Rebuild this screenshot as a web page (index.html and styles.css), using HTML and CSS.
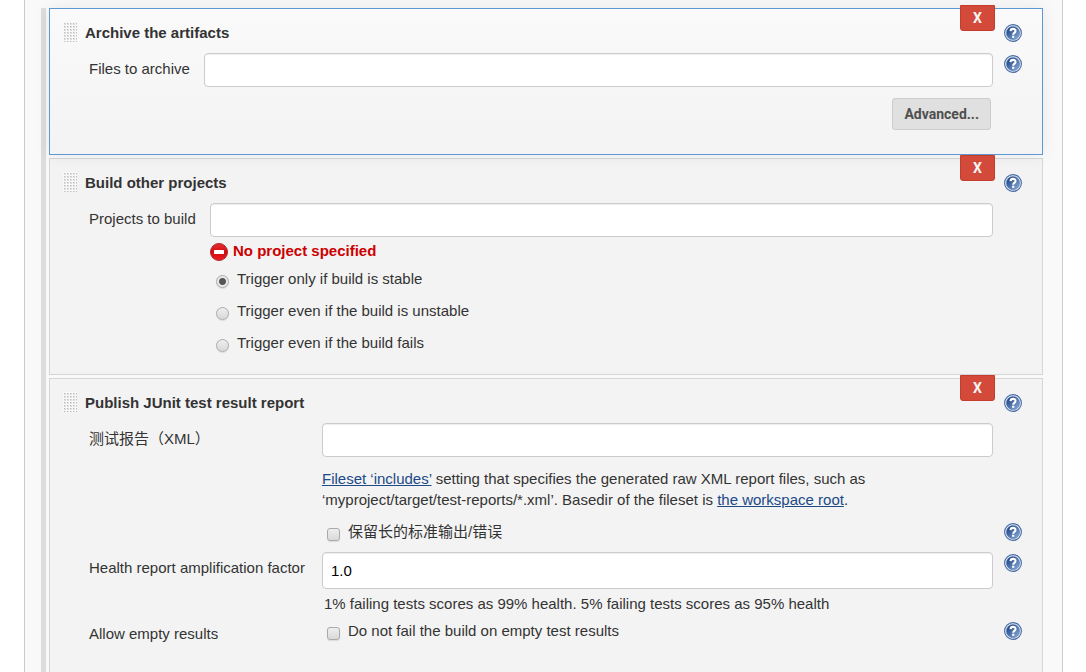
FILE: index.html
```html
<!DOCTYPE html>
<html lang="en">
<head>
<meta charset="utf-8">
<title>Post-build actions</title>
<link rel="stylesheet" href="styles.css">
</head>
<body>
<svg class="defs" aria-hidden="true">
  <defs>
    <linearGradient id="helpFill" x1="0" y1="0" x2="1" y2="1">
      <stop offset="0.15" stop-color="#1f4585"/>
      <stop offset="1" stop-color="#90b2df"/>
    </linearGradient>
    <linearGradient id="errorFill" x1="0" y1="0" x2="0" y2="1">
      <stop offset="0" stop-color="#e33030"/>
      <stop offset="0.5" stop-color="#d30c12"/>
      <stop offset="1" stop-color="#ef1b1b"/>
    </linearGradient>
    <pattern id="grip" width="3" height="3" patternUnits="userSpaceOnUse">
      <rect width="3" height="3" fill="#f8f8f8"/>
      <rect x="1" y="1" width="2" height="2" fill="#dedede"/>
      <rect x="1" y="1" width="1" height="1" fill="#bdbdbd"/>
    </pattern>
    <symbol id="help" viewBox="0 0 18 18">
      <circle cx="9" cy="9" r="8.4" fill="#e3eaf4" stroke="#476ba4" stroke-width="1.1"/>
      <circle cx="9" cy="9" r="6.6" fill="url(#helpFill)" stroke="#5e7eb0" stroke-width="0.6"/>
      <path d="M6.5 7.1C6.6 4.2 11.5 4 11.5 7c0 1.9-2.3 1.9-2.3 3.7" fill="none" stroke="#fff" stroke-width="2.1"/>
      <rect x="8.1" y="11.7" width="2.2" height="2.1" fill="#fff"/>
    </symbol>
  </defs>
</svg>

<main class="panel">
  <div class="card-list">
    <section class="card card-active">
      <button class="remove" type="button">X</button>
      <header class="card-head">
        <svg class="handle" viewBox="0 0 14 20"><rect width="14" height="20" fill="url(#grip)"/></svg>
        <h2 class="title">Archive the artifacts</h2>
        <button class="help" type="button" aria-label="Help"><svg class="icon"><use href="#help"/></svg></button>
      </header>
      <div class="fields fields-archive">
        <label class="label" for="files">Files to archive</label>
        <input class="text" id="files" type="text">
        <button class="help" type="button" aria-label="Help"><svg class="icon"><use href="#help"/></svg></button>
        <div class="field actions"><button class="advanced" type="button">Advanced...</button></div>
      </div>
    </section>

    <section class="card">
      <button class="remove" type="button">X</button>
      <header class="card-head">
        <svg class="handle" viewBox="0 0 14 20"><rect width="14" height="20" fill="url(#grip)"/></svg>
        <h2 class="title">Build other projects</h2>
        <button class="help" type="button" aria-label="Help"><svg class="icon"><use href="#help"/></svg></button>
      </header>
      <div class="fields fields-projects">
        <label class="label" for="projects">Projects to build</label>
        <input class="text" id="projects" type="text">
        <div class="field">
          <p class="error">
            <svg class="icon error-icon" viewBox="0 0 18 18"><circle cx="9" cy="9" r="8.5" fill="url(#errorFill)" stroke="#a8292b"/><rect x="4" y="7" width="10" height="4" rx="0.6" fill="#fff"/></svg>
            No project specified
          </p>
          <label class="option option-radio"><input class="radio" type="radio" name="trigger" checked>Trigger only if build is stable</label>
          <label class="option option-radio"><input class="radio" type="radio" name="trigger">Trigger even if the build is unstable</label>
          <label class="option option-radio"><input class="radio" type="radio" name="trigger">Trigger even if the build fails</label>
        </div>
      </div>
    </section>

    <section class="card">
      <button class="remove" type="button">X</button>
      <header class="card-head">
        <svg class="handle" viewBox="0 0 14 20"><rect width="14" height="20" fill="url(#grip)"/></svg>
        <h2 class="title">Publish JUnit test result report</h2>
        <button class="help" type="button" aria-label="Help"><svg class="icon"><use href="#help"/></svg></button>
      </header>
      <div class="fields fields-report">
        <label class="label" for="reports">测试报告（XML）</label>
        <input class="text" id="reports" type="text">
        <p class="field description"><a class="link" href="#">Fileset ‘includes’</a> setting that specifies the generated raw XML report files, such as ‘myproject/target/test-reports/*.xml’. Basedir of the fileset is <a class="link" href="#">the workspace root</a>.</p>
        <label class="field option option-spaced"><input class="check" type="checkbox">保留长的标准输出/错误</label>
        <button class="help help-option" type="button" aria-label="Help"><svg class="icon"><use href="#help"/></svg></button>
        <label class="label" for="factor">Health report amplification factor</label>
        <input class="text text-tall" id="factor" type="text" value="1.0">
        <button class="help" type="button" aria-label="Help"><svg class="icon"><use href="#help"/></svg></button>
        <p class="field note">1% failing tests scores as 99% health. 5% failing tests scores as 95% health</p>
        <label class="label label-option" for="empty">Allow empty results</label>
        <label class="field option"><input class="check" id="empty" type="checkbox">Do not fail the build on empty test results</label>
        <button class="help help-option" type="button" aria-label="Help"><svg class="icon"><use href="#help"/></svg></button>
      </div>
    </section>
  </div>
</main>
</body>
</html>
```

FILE: styles.css
```css
* {
  box-sizing: border-box;
}

body {
  margin: 0;
  background: #fff;
  color: #333;
  font: 15px/21px "Liberation Sans", Arial, "Noto Sans CJK SC", sans-serif;
}

button,
input {
  margin: 0;
  font: inherit;
}

.defs {
  position: absolute;
  width: 0;
  height: 0;
}

.panel {
  min-height: 100vh;
  margin: 0 23px 0 24px;
  padding: 8px 19px 0 16px;
  border: solid #ccc;
  border-width: 0 1px;
  background: #f9f9f9;
}

.card-list {
  display: flex;
  flex-direction: column;
  gap: 3px;
  min-height: calc(100vh - 8px);
  padding-left: 3px;
  border-left: 5px solid #ddd;
}

.card {
  position: relative;
  padding-bottom: 16px;
  border: 1px solid #d6d6d6;
  background: #f3f3f3;
}

.card:last-child {
  flex: 1;
  padding-bottom: 24px;
  border-bottom: 0;
}

.card-active {
  z-index: 1;
  padding-bottom: 24px;
  border-color: #5c98d2;
  background: linear-gradient(#fafafa, #f3f3f3);
  box-shadow: 0 0 16px rgba(0, 0, 0, 0.07);
}

.card + .card .remove {
  z-index: 2;
}

.remove {
  position: absolute;
  top: -4px;
  right: 47px;
  width: 35px;
  height: 26px;
  padding: 0;
  border: 1px solid #c43c2c;
  border-radius: 0 0 3px 3px;
  background: #d34a3a;
  color: #f5f5f5;
  font: bold 14px/22px Roboto, sans-serif;
}

.card-head {
  display: flex;
  align-items: flex-start;
  height: 44px;
  padding: 13px 20px 0 13px;
}

.handle {
  width: 14px;
  height: 20px;
}

.title {
  flex: 1;
  margin: 0;
  padding-left: 8px;
  font-size: 15px;
  line-height: 21px;
}

.help {
  width: 18px;
  height: 18px;
  margin-top: 2px;
  padding: 0;
  border: 0;
  background: none;
}

.icon {
  display: block;
  width: 18px;
  height: 18px;
}

.fields {
  display: grid;
  column-gap: 11px;
  align-items: start;
  padding: 0 20px 0 39px;
}

.fields-archive {
  grid-template-columns: minmax(104px, auto) 1fr 18px;
}

.fields-projects {
  grid-template-columns: minmax(110px, auto) 1fr 18px;
}

.fields-report {
  grid-template-columns: minmax(222px, auto) 1fr 18px;
}

.label {
  grid-column: 1;
  padding-top: 5px;
}

.label-option {
  padding-top: 9px;
}

.field {
  grid-column: 2;
}

.text {
  grid-column: 2;
  width: 100%;
  height: 34px;
  padding: 0 8px;
  border: 1px solid #ccc;
  border-radius: 4px;
  background: #fff;
  box-shadow: inset 0 1px 1px rgba(0, 0, 0, 0.07);
  color: #000;
}

.text-tall {
  height: 37px;
}

.actions {
  display: flex;
  justify-content: flex-end;
  padding: 11px 2px 0 0;
}

.advanced {
  height: 32px;
  padding: 0 11px;
  border: 1px solid #ccc;
  border-radius: 3px;
  background: #e0e0e0;
  color: #4f4f4f;
  font: bold 14px/20px Roboto, sans-serif;
}

.error {
  display: flex;
  align-items: center;
  gap: 5px;
  height: 25px;
  margin: 0;
  padding-top: 2px;
  color: #c00;
  font-weight: bold;
}

.error-icon {
  margin-top: 2px;
}

.option {
  display: flex;
  align-items: center;
  gap: 8px;
  height: 32px;
  padding-left: 5px;
}

.option-radio {
  padding-left: 6px;
}

.option-spaced {
  margin-bottom: 5px;
}

.radio,
.check {
  appearance: none;
  flex: none;
  width: 13px;
  height: 13px;
  margin-top: 7px;
  border: 1px solid #aaa;
  border-radius: 3px;
  background: linear-gradient(#eee, #d9d9d9);
  box-shadow: 0 1px 1px rgba(0, 0, 0, 0.1);
}

.radio {
  border-radius: 50%;
}

.radio:checked {
  background: radial-gradient(circle, #555 0 3px, #e9e9e9 4px);
}

.description {
  margin: 0;
  padding: 11px 0 5px;
}

.link {
  color: #204a87;
}

.help-option {
  margin-top: 8px;
}

.note {
  margin: 0;
  padding: 4px 0 0 2px;
}
```
